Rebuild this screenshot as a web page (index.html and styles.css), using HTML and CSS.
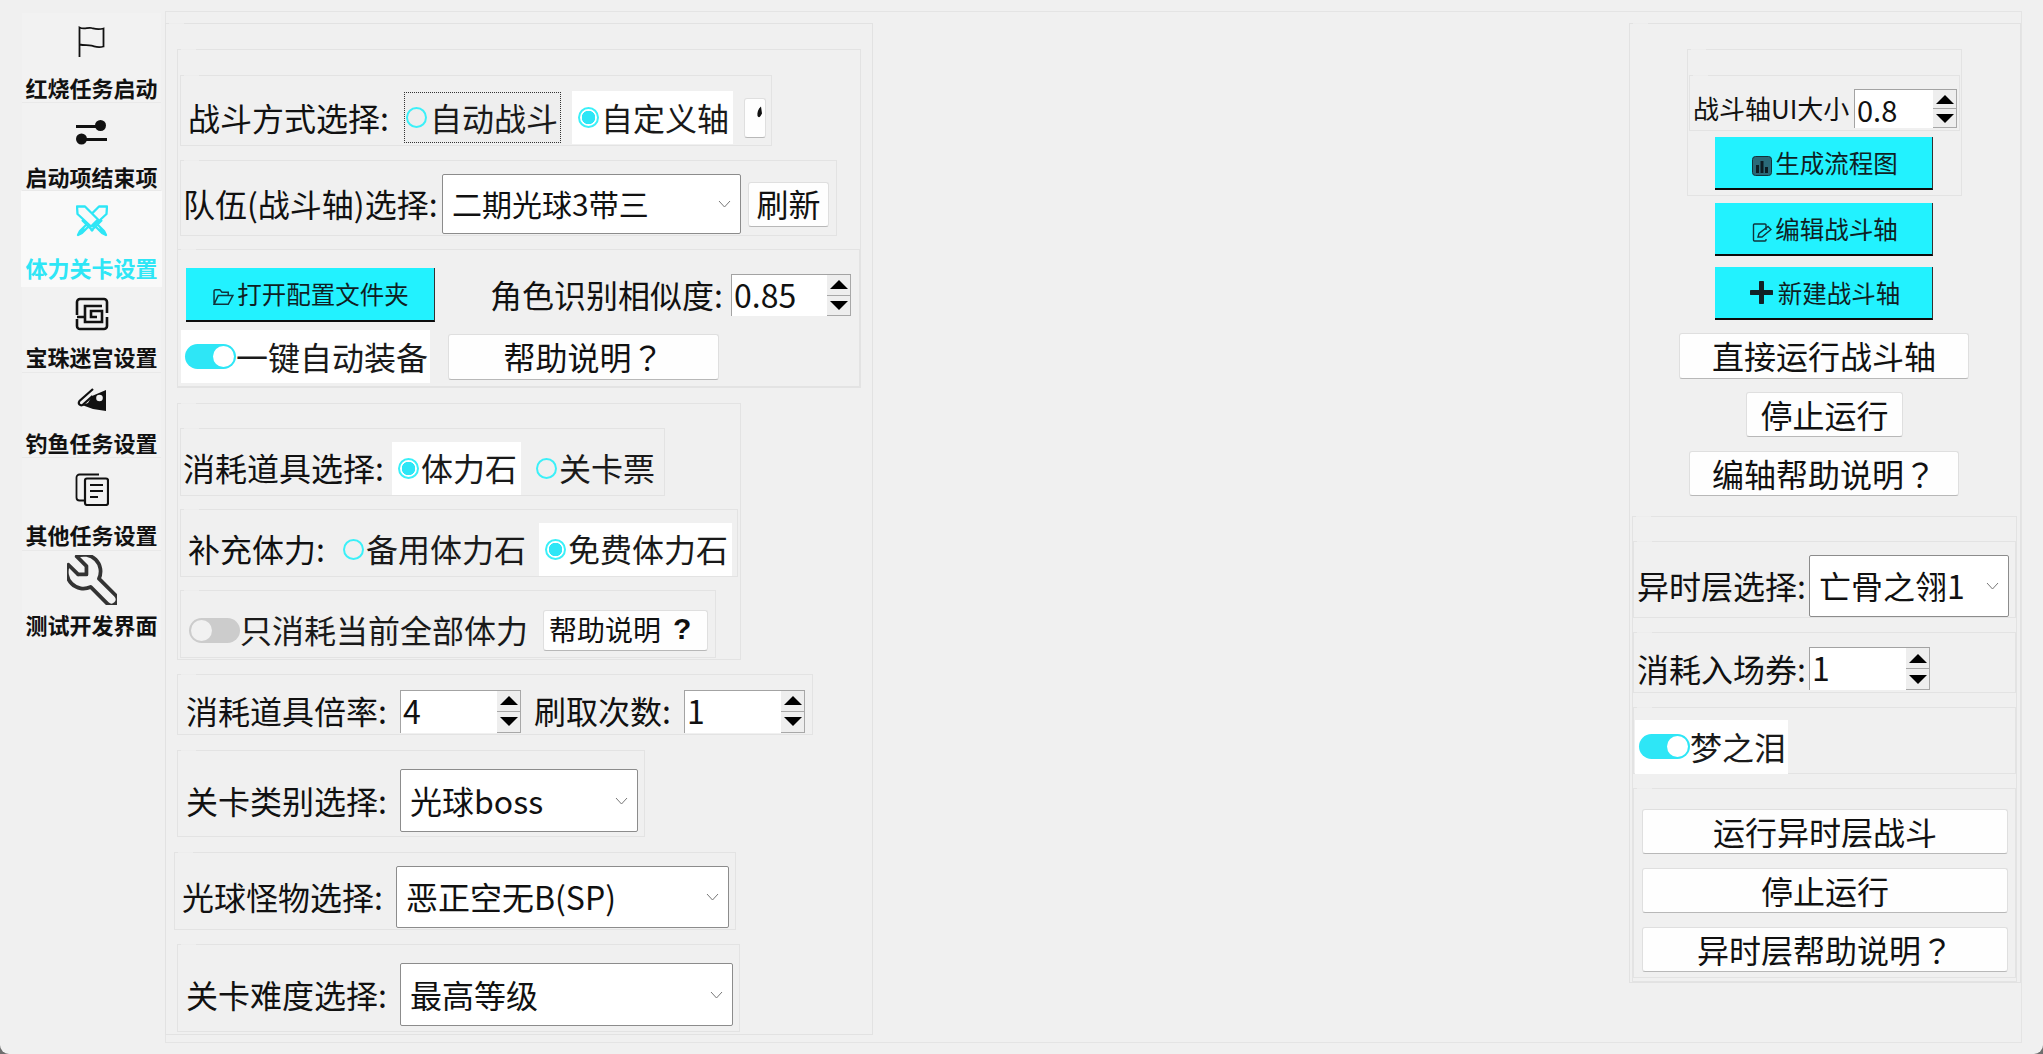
FILE: index.html
```html
<!DOCTYPE html>
<html lang="zh-CN">
<head>
<meta charset="utf-8">
<title>设置</title>
<link rel="stylesheet" href="styles.css">
</head>
<body>
<div class="window">
  <nav class="sidebar">
    <div class="nav n1">
      <svg class="ic" width="28" height="32" viewBox="0 0 28 32"><path d="M1.500 31V1.500c5 2.500 8-0.500 12 0.500s6 2 12 0.500v18c-6 1.500-8 0-12-0.800s-7-0.200-12-1.200" fill="none" stroke="#111" stroke-width="1.800"/></svg>
      <span>红烧任务启动</span>
    </div>
    <div class="nav n2">
      <svg class="ic" width="31" height="25" viewBox="0 0 31 25"><path d="M0 6.500h24M6 19.500h25" stroke="#111" stroke-width="3.200"/><circle cx="24.500" cy="5.500" r="5.500" fill="#111"/><circle cx="5.500" cy="19" r="5.500" fill="#111"/></svg>
      <span>启动项结束项</span>
    </div>
    <div class="nav n3 active">
      <svg class="ic" width="32" height="32" viewBox="0 0 32 32" fill="#f9f9f9" stroke="#2ee6f6" stroke-width="2.300" stroke-linejoin="round"><path d="M31 1.500h-8L10 14.500l7 7L30.500 9z"/><path d="M6 15l11 11M3 28l5-5M10 20l-6 6-2 4 4-2 6-6"/><path d="M1 1.500h8L22 14.500l-7 7L1.500 9z"/><path d="M26 15 15 26M29 28l-5-5M22 20l6 6 2 4-4-2-6-6"/></svg>
      <span>体力关卡设置</span>
    </div>
    <div class="nav n4">
      <svg class="ic" width="34" height="34" viewBox="0 0 34 34" fill="none" stroke="#111" stroke-width="2.600"><path d="M2 18V5a3 3 0 0 1 3-3h24a3 3 0 0 1 3 3v11M32 20v9a3 3 0 0 1-3 3H5a3 3 0 0 1-3-3v-7M2 20h8"/><path d="M27 9H10v16h17V14H16v6h6"/></svg>
      <span>宝珠迷宫设置</span>
    </div>
    <div class="nav n5">
      <svg class="ic" width="30" height="24" viewBox="0 0 30 24"><path d="M29 2 15 8l-4 7-6 2 11 4 13 2z" fill="#111"/><circle cx="22.500" cy="10" r="3.300" fill="#f2f2f2"/><path d="M16 1 2.500 13c-2 3 1 5 3 4l10-9" fill="none" stroke="#111" stroke-width="2.200"/></svg>
      <span>钓鱼任务设置</span>
    </div>
    <div class="nav n6">
      <svg class="ic" width="34" height="33" viewBox="0 0 34 33" fill="none" stroke="#111" stroke-width="1.800"><path d="M24 1.500H4.500a3 3 0 0 0-3 3v20a3 3 0 0 0 3 3H9"/><rect x="10" y="5.500" width="23" height="26.500" rx="2" stroke-width="2.200"/><path d="M15 12h13M15 18h13M15 24h8"/></svg>
      <span>其他任务设置</span>
    </div>
    <div class="nav n7">
      <svg class="ic" width="50" height="50" viewBox="3 3 18 18" fill="none" stroke="#333" stroke-width="1.350" stroke-linecap="round" stroke-linejoin="round"><path d="M7 10h3v-3l-3.500-3.500a6 6 0 0 1 8 8l6 6a2 2 0 0 1-3 3l-6-6a6 6 0 0 1-8-8l3.500 3.500"/></svg>
      <span>测试开发界面</span>
    </div>
  </nav>

  <main class="pane">
    <section class="frame frame-left">
      <div class="box g-a">
        <div class="box row a1">
          <span class="lbl w215">战斗方式选择:</span>
          <div class="radio focus"><i class="dot"></i><span>自动战斗</span></div>
          <div class="radio on ml11"><i class="dot sel"></i><span>自定义轴</span></div>
          <button class="btn tiny"><svg width="8" height="12" viewBox="0 0 8 12"><path d="M5 0.500C2 3 1 7 1.500 10c.5 1.500 2.500 1.500 3 0L6 7.500z" fill="#111"/></svg></button>
        </div>
        <div class="box row a2">
          <span class="lbl w258">队伍(战斗轴)选择:</span>
          <div class="combo c-team"><span>二期光球3带三</span><svg class="chev" width="13" height="8" viewBox="0 0 13 8"><path d="M1 1l5.500 6L12 1" fill="none" stroke="#777"/></svg></div>
          <button class="btn b-refresh"><span>刷新</span></button>
        </div>
        <div class="box a3">
          <div class="line l1">
            <button class="act b-open"><svg width="21" height="18" viewBox="0 0 20 17" fill="none" stroke="#10343c" stroke-width="1.400"><path d="M1 15V3a1.500 1.500 0 0 1 1.500-1.500h4l2 2.500h6V7M1 15.500h13.500L19 7H5z"/></svg><span>打开配置文件夹</span></button>
            <span class="lbl w240 ml56">角色识别相似度:</span>
            <div class="spin s-a"><span class="val">0.85</span><div class="steps"><i class="up"></i><i class="down"></i></div></div>
          </div>
          <div class="line l2">
            <div class="toggle t-auto"><i class="track live"><b></b></i><span>一键自动装备</span></div>
            <button class="btn b-help"><span>帮助说明<em class="qm" lang="ja">？</em></span></button>
          </div>
        </div>
      </div>

      <div class="box g-b">
        <div class="box row b1">
          <span class="lbl w208">消耗道具选择:</span>
          <div class="radio on"><i class="dot sel"></i><span>体力石</span></div>
          <div class="radio ml9"><i class="dot"></i><span>关卡票</span></div>
        </div>
        <div class="box row b2">
          <span class="lbl w148">补充体力:</span>
          <div class="radio"><i class="dot"></i><span>备用体力石</span></div>
          <div class="radio on ml9"><i class="dot sel"></i><span>免费体力石</span></div>
        </div>
        <div class="box row b3">
          <div class="toggle"><i class="track"><b></b></i><span>只消耗当前全部体力</span></div>
          <button class="btn b-help2"><span>帮助说明</span><strong>?</strong></button>
        </div>
      </div>

      <div class="box row r-c">
        <span class="lbl w213">消耗道具倍率:</span>
        <div class="spin s-b"><span class="val">4</span><div class="steps"><i class="up"></i><i class="down"></i></div></div>
        <span class="lbl w149 ml14">刷取次数:</span>
        <div class="spin s-b"><span class="val">1</span><div class="steps"><i class="up"></i><i class="down"></i></div></div>
      </div>
      <div class="box row r-d">
        <span class="lbl w213">关卡类别选择:</span>
        <div class="combo c-kind"><span>光球boss</span><svg class="chev" width="13" height="8" viewBox="0 0 13 8"><path d="M1 1l5.500 6L12 1" fill="none" stroke="#777"/></svg></div>
      </div>
      <div class="box row r-e">
        <span class="lbl w213">光球怪物选择:</span>
        <div class="combo c-mon"><span>恶正空无B(SP)</span><svg class="chev" width="13" height="8" viewBox="0 0 13 8"><path d="M1 1l5.500 6L12 1" fill="none" stroke="#777"/></svg></div>
      </div>
      <div class="box row r-f">
        <span class="lbl w213">关卡难度选择:</span>
        <div class="combo c-diff"><span>最高等级</span><svg class="chev" width="13" height="8" viewBox="0 0 13 8"><path d="M1 1l5.500 6L12 1" fill="none" stroke="#777"/></svg></div>
      </div>
    </section>

    <section class="frame frame-right">
      <div class="box g-ui">
        <div class="box row ui-row">
          <span class="lbl small w160">战斗轴UI大小</span>
          <div class="spin s-ui"><span class="val">0.8</span><div class="steps"><i class="up"></i><i class="down"></i></div></div>
        </div>
        <button class="act b-side b-flow"><svg width="20" height="20" viewBox="0 0 20 20"><rect x="0.500" y="0.500" width="19" height="19" rx="3" fill="#2a6a78" stroke="#12323a"/><path d="M4 17V9h3v8zM8.500 17V5h3v12zM13 17v-6h3v6z" fill="#0c1c22"/></svg><span>生成流程图</span></button>
      </div>
      <button class="act b-side b-edit"><svg width="20" height="20" viewBox="0 0 20 20" fill="none" stroke="#10343c" stroke-width="1.400"><path d="M14 8V3a1 1 0 0 0-1-1H2.500a1 1 0 0 0-1 1v15a1 1 0 0 0 1 1H13a1 1 0 0 0 1-1v-1"/><path d="M6 15l1-3.500 9-7 3 3-9 7.500z"/></svg><span>编辑战斗轴</span></button>
      <button class="act b-side b-new"><svg width="23" height="23" viewBox="0 0 23 23"><path d="M11.500 1.500v20M1.500 11.500h20" stroke="#112227" stroke-width="5" stroke-linecap="round"/></svg><span>新建战斗轴</span></button>
      <button class="btn b-run"><span>直接运行战斗轴</span></button>
      <button class="btn b-stop"><span>停止运行</span></button>
      <button class="btn b-axis"><span>编轴帮助说明<em class="qm" lang="ja">？</em></span></button>

      <div class="box g-c">
        <div class="box row c1">
          <span class="lbl w171">异时层选择:</span>
          <div class="combo c-layer"><span>亡骨之翎1</span><svg class="chev" width="13" height="8" viewBox="0 0 13 8"><path d="M1 1l5.500 6L12 1" fill="none" stroke="#777"/></svg></div>
        </div>
        <div class="box row c2">
          <span class="lbl w171">消耗入场券:</span>
          <div class="spin s-b"><span class="val">1</span><div class="steps"><i class="up"></i><i class="down"></i></div></div>
        </div>
        <div class="box row c3">
          <div class="toggle t-dream"><i class="track live"><b></b></i><span>梦之泪</span></div>
        </div>
        <div class="box c4">
          <button class="btn b-wide"><span>运行异时层战斗</span></button>
          <button class="btn b-wide"><span>停止运行</span></button>
          <button class="btn b-wide"><span>异时层帮助说明<em class="qm" lang="ja">？</em></span></button>
        </div>
      </div>
    </section>
  </main>
</div>
</body>
</html>
```

FILE: styles.css
```css
* { box-sizing: border-box; }
html, body { margin: 0; padding: 0; background: #6e6e6e; overflow: hidden; }
body { font-family: "Noto Sans CJK SC", "Noto Sans", sans-serif; color: #111; }
.window { width: 2043px; height: 1054px; background: #f0f0f0; border-radius: 0 0 9px 9px; display: flex; align-items: flex-start; overflow: hidden; }

/* sidebar */
.sidebar { width: 139px; margin: 13px 0 0 22px; flex: none; background: #f2f2f2; }
.nav { display: flex; flex-direction: column; align-items: center; border-bottom: 1px solid #e9e9e9; font-size: 22px; font-weight: 700; line-height: 24px; white-space: nowrap; }
.nav .ic { display: block; flex: none; }
.n1 { height: 90px; padding-top: 13px; } .n1 .ic { margin-bottom: 17px; }
.n2 { height: 88px; padding-top: 17px; } .n2 .ic { margin-bottom: 19px; }
.n3 { height: 96px; padding-top: 14px; margin: 0 -1px; } .n3 .ic { margin-bottom: 18px; }
.n4 { height: 86px; padding-top: 10px; } .n4 .ic { margin-bottom: 13px; }
.n5 { height: 85px; padding-top: 15px; } .n5 .ic { margin-bottom: 18px; }
.n6 { height: 93px; padding-top: 15px; } .n6 .ic { margin-bottom: 16px; }
.n7 { height: 89px; padding-top: 4px; border-bottom: 0; } .n7 .ic { margin-bottom: 7px; }
.active { background: #f9f9f9; color: #2ee6f6; border-bottom: 0; }

/* frames */
.pane { width: 1857px; height: 1032px; margin: 11px 0 0 4px; padding-top: 11px; border: 1px solid #e4e4e4; display: flex; justify-content: space-between; align-items: flex-start; flex: none; }
.frame { border: 1px solid #e2e2e2; position: relative; flex: none; }
.frame-left { width: 708px; height: 1012px; margin-left: -1px; }
.frame-right { width: 392px; height: 960px; padding-right: 2px; display: flex; flex-direction: column; align-items: center; }
.box { border: 1px solid #e3e3e3; position: relative; flex: none; }
.frame::before, .box::before { content: ""; position: absolute; left: 3px; top: -1px; width: 15px; height: 1px; background: #ededed; }
.row { display: flex; align-items: center; }

/* left groups */
.g-a { width: 684px; height: 339px; margin: 25px 0 0 11px; }
.a1 { width: 592px; height: 71px; margin: 25px 0 0 2px; padding: 15px 0 1px 8px; }
.a2 { width: 657px; height: 76px; margin: 14px 0 0 2px; padding: 13px 0 1px 3px; }
.a3 { width: 683px; height: 138px; margin: 13px 0 0 -1px; padding-top: 18px; }
.line { display: flex; align-items: center; }
.l1 { height: 54px; padding-left: 8px; }
.l2 { height: 53px; padding-left: 3px; margin-top: 8px; }

.g-b { width: 564px; height: 257px; margin: 15px 0 0 11px; }
.b1 { width: 485px; height: 68px; margin: 24px 0 0 2px; padding: 13px 0 1px 3px; }
.b2 { width: 558px; height: 68px; margin: 13px 0 0 2px; padding: 13px 0 1px 8px; }
.b3 { width: 536px; height: 68px; margin: 13px 0 0 2px; padding: 13px 0 1px 8px; }

.r-c { width: 636px; height: 61px; margin: 14px 0 0 11px; padding: 14px 0 1px 9px; }
.r-d { width: 468px; height: 87px; margin: 15px 0 0 11px; padding: 18px 0 4px 9px; }
.r-e { width: 562px; height: 78px; margin: 15px 0 0 8px; padding: 13px 0 1px 8px; }
.r-f { width: 563px; height: 88px; margin: 14px 0 0 11px; padding: 18px 0 5px 9px; }

/* right groups */
.g-ui { width: 275px; height: 147px; margin: 25px 0 0 1px; }
.ui-row { width: 271px; height: 56px; margin: 25px 0 0 1px; padding: 13px 0 2px 4px; }
.g-c { width: 385px; height: 466px; margin: 20px 0 0 1px; }
.c1 { width: 383px; height: 77px; margin-top: 24px; padding: 13px 0 0 4px; }
.c2 { width: 383px; height: 61px; margin-top: 14px; padding: 14px 0 2px 4px; }
.c3 { width: 383px; height: 67px; margin-top: 14px; padding: 12px 0 0 1px; }
.c4 { width: 383px; height: 190px; margin-top: 14px; padding: 20px 0 0 8px; display: flex; flex-direction: column; gap: 14px; }

/* text */
.lbl { font-size: 32px; line-height: 40px; flex: none; white-space: nowrap; text-indent: -1px; padding-bottom: 2px; }
.lbl.small { font-size: 26px; }
.w148 { width: 148px; } .w149 { width: 149px; } .w160 { width: 160px; } .w171 { width: 171px; }
.w208 { width: 208px; } .w213 { width: 213px; } .w215 { width: 215px; } .w240 { width: 240px; } .w258 { width: 258px; }
.ml9 { margin-left: 9px; } .ml11 { margin-left: 11px; } .ml14 { margin-left: 14px; } .ml56 { margin-left: 56px; }
.qm { font-family: "Noto Sans CJK JP", sans-serif; font-style: normal; }

/* radio */
.radio { height: 53px; padding: 0 4px 0 6px; display: flex; align-items: center; gap: 2px; font-size: 32px; line-height: 40px; flex: none; white-space: nowrap; color: #1a1a1a; }
.radio span { padding-bottom: 2px; }
.radio.on { background: #fff; }
.radio.focus { width: 157px; height: 51px; padding: 0 1px; gap: 3px; border: 1px dotted #333; background: #eeeeee; }
.dot { width: 21px; height: 21px; border-radius: 50%; border: 2px solid #3bf0f8; flex: none; display: block; background: transparent; }
.dot.sel { border-color: #3bf0f8; background: radial-gradient(circle, #2ee6f6 0 6.500px, #fff 7px); }

/* buttons */
.btn { font-family: inherit; font-size: 32px; line-height: 40px; color: #111; background: #fefefe; border: 1px solid #dfdfdf; border-bottom-color: #b8b8b8; border-radius: 3px; padding: 0 0 2px; flex: none; white-space: nowrap; }
.tiny { width: 22px; height: 40px; margin-left: 11px; display: flex; justify-content: flex-end; padding: 7px 1px 0 0; align-items: flex-start; }
.b-refresh { width: 81px; height: 45px; margin-left: 7px; }
.b-help { width: 271px; height: 46px; margin-left: 18px; }
.b-help2 { width: 165px; height: 41px; margin-left: 15px; font-size: 28px; display: flex; align-items: center; padding-left: 5px; }
.b-help2 strong { font-family: "Liberation Sans", sans-serif; font-size: 30px; font-weight: 900; margin-left: 12px; }
.b-run { width: 290px; height: 46px; margin-top: 13px; }
.b-stop { width: 157px; height: 45px; margin: 13px 0 0 1px; }
.b-axis { width: 270px; height: 45px; margin-top: 14px; }
.b-wide { width: 366px; height: 45px; }

.act { font-family: inherit; font-size: 24.500px; line-height: 30px; color: #0f1f24; background: #22f2ff; border: 0; border-bottom: 2px solid #0c0c0c; border-right: 1px solid #333; padding: 0; display: flex; align-items: center; justify-content: center; gap: 3px; flex: none; white-space: nowrap; }
.act svg { flex: none; margin-top: 6px; }
.b-open { width: 249px; height: 54px; padding-left: 2px; }
.b-side { width: 218px; height: 53px; padding-left: 3px; }
.b-flow { margin: 6px 0 0 27px; }
.b-edit { margin-top: 7px; }
.b-new { margin-top: 11px; gap: 5px; }
.b-new svg { margin-top: 0; }

/* combo */
.combo { height: 62px; background: #fff; border: 1px solid #8c8c8c; border-radius: 2px; padding: 0 9px 0 9px; font-size: 32px; line-height: 40px; display: flex; align-items: center; justify-content: space-between; flex: none; white-space: nowrap; }
.combo span { padding-bottom: 2px; }
.chev { flex: none; }
.c-team { width: 299px; height: 60px; font-size: 30px; }
.c-kind { width: 238px; height: 63px; }
.c-mon { width: 333px; }
.c-diff { width: 333px; height: 63px; }
.c-layer { width: 200px; }

/* spin */
.spin { display: flex; background: #fff; border-top: 1px solid #a3a3a3; border-left: 1px solid #a3a3a3; flex: none; font-size: 32px; line-height: 38px; }
.val { flex: 1; padding-left: 2px; }
.steps { width: 24px; display: flex; flex-direction: column; background: #eeeeee; border-right: 1px solid #a8a8a8; border-bottom: 1px solid #a8a8a8; }
.steps i { flex: 1; display: flex; align-items: center; justify-content: center; }
.steps .down { border-top: 1px solid #a8a8a8; }
.up::after, .down::after { content: ""; width: 0; height: 0; border-left: 9px solid transparent; border-right: 9px solid transparent; }
.up::after { border-bottom: 9px solid #000; }
.down::after { border-top: 9px solid #000; }
.s-a { width: 120px; height: 42px; }
.s-b { width: 121px; height: 43px; }
.s-ui { width: 103px; height: 39px; font-size: 29px; }

/* toggle */
.toggle { display: flex; align-items: center; gap: 0; font-size: 32px; line-height: 40px; height: 53px; flex: none; white-space: nowrap; color: #1a1a1a; }
.toggle span { padding-bottom: 2px; }
.t-auto { width: 249px; background: #fff; padding-left: 4px; }
.t-dream { width: 153px; height: 54px; background: #fff; padding-left: 4px; }
.track { width: 51px; height: 25px; border-radius: 13px; background: #cccccc; display: flex; align-items: center; padding-left: 2px; flex: none; }
.track b { width: 21px; height: 21px; border-radius: 50%; background: #f1f1f1; display: block; }
.track.live { background: #2ee6f6; justify-content: flex-end; padding: 0 2px 0 0; }
.track.live b { background: #fff; }
```
